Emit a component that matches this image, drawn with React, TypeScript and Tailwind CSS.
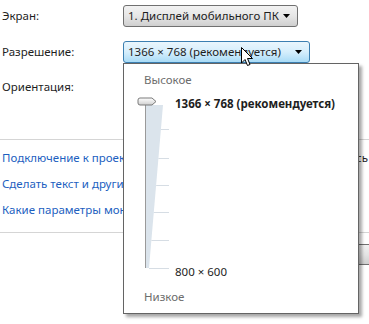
const font = { fontFamily: '"Noto Sans", "Open Sans", sans-serif' }

function Arrow() {
  return (
    <svg width="7" height="4" viewBox="0 0 7 4" className="shrink-0">
      <path d="M0 0 H7 L3.5 4 Z" fill="#000" />
    </svg>
  )
}

const ticks = [34, 63, 90, 117, 145, 173]

function SliderArt() {
  return (
    <svg width="40" height="182" viewBox="0 0 40 182" className="absolute left-[10px] top-[-2px]">
      <defs>
        <linearGradient id="thumb" x1="0" y1="0" x2="0" y2="1">
          <stop offset="0" stopColor="#ffffff" />
          <stop offset="1" stopColor="#cfcfcf" />
        </linearGradient>
      </defs>
      <polygon points="12,10 29,10 15,173 12,173" fill="#dbe4ec" />
      {ticks.map((y) => (
        <line key={y} x1={29 - (y - 10) * 0.0859} y1={y + 0.5} x2="35" y2={y + 0.5} stroke="#d6dde4" />
      ))}
      <line x1="11.5" y1="10" x2="11.5" y2="173" stroke="#9a9a9a" />
      <path
        d="M6 3 H18 L22 6.5 L18 10 H6 Q4 10 4 8 V5 Q4 3 6 3 Z"
        fill="url(#thumb)"
        stroke="#7a7a7a"
      />
    </svg>
  )
}

export default function App() {
  const links = [
    "Подключение к проектору (или нажмите клавишу",
    "Сделать текст и другие элементы больше или меньше",
    "Какие параметры монитора следует выбрать?",
  ]

  return (
    <div
      className="relative w-[369px] h-[324px] overflow-hidden bg-white text-[11.5px] leading-[14px] text-[#1e1e1e]"
      style={font}
    >
      <div className="pt-[5px]">
        <div className="flex items-center h-[22px]">
          <div className="w-[123px] pl-[2px]">Экран:</div>
          <div className="flex items-center justify-between w-[175px] h-[22px] pl-[4px] pr-[7px] rounded-[3px] border border-[#707070] bg-gradient-to-b from-[#f2f2f2] via-[#e6e6e6] to-[#cfcfcf]">
            <span className="whitespace-nowrap">1. Дисплей мобильного ПК</span>
            <Arrow />
          </div>
        </div>
        <div className="flex items-center h-[22px] mt-[14px]">
          <div className="w-[123px] pl-[2px]">Разрешение:</div>
          <div className="flex items-center justify-between w-[187px] h-[22px] pl-[4px] pr-[7px] rounded-[3px] border border-[#3c7fb1] bg-gradient-to-b from-[#eaf6fd] via-[#d5eefc] to-[#a9dbf6]">
            <span className="whitespace-nowrap">1366 × 768 (рекомендуется)</span>
            <Arrow />
          </div>
        </div>
        <div className="flex items-center h-[22px] mt-[13px]">
          <div className="w-[123px] pl-[2px]">Ориентация:</div>
        </div>
      </div>

      <div className="mt-[41px] h-px bg-[#d5d5d5]" />

      <div className="flex flex-col gap-[12px] pt-[11px] pl-[2px] text-[#1d5fbf]">
        {links.map((l, i) => (
          <div key={i} className="flex whitespace-nowrap">
            <span>{l}</span>
            {i === 0 && <span className="ml-auto pr-[1px] text-[#1e1e1e]">сь</span>}
          </div>
        ))}
      </div>

      <div className="mt-[15px] h-px bg-[#d5d5d5]" />

      <div className="flex justify-end mt-[11px] mr-[-40px]">
        <div className="w-[90px] h-[21px] rounded-[3px] border border-[#707070] bg-gradient-to-b from-[#f2f2f2] via-[#e4e4e4] to-[#cfcfcf]" />
      </div>

      <div className="absolute left-[123px] top-[63px] w-[236px] h-[251px] bg-white border border-[#646464] shadow-[3px_3px_3px_rgba(0,0,0,0.35)]">
        <div className="pl-[20px] pt-[9px] text-[#6d6d6d]">Высокое</div>
        <div className="relative h-[182px] mt-[10px]">
          <SliderArt />
          <div className="ml-[51px] h-full flex flex-col justify-between">
            <div className="font-bold whitespace-nowrap">1366 × 768 (рекомендуется)</div>
            <div>800 × 600</div>
          </div>
        </div>
        <div className="pl-[20px] mt-[11px] text-[#6d6d6d]">Низкое</div>
      </div>

      <svg
        width="13"
        height="20"
        viewBox="0 0 13 20"
        className="absolute left-[241px] top-[47px]"
      >
        <path
          d="M0.5 0.5 V16 L4 12.5 L6.5 18.5 L9 17.5 L6.5 11.5 H11.5 Z"
          fill="#fff"
          stroke="#000"
          strokeLinejoin="round"
        />
      </svg>
    </div>
  )
}
